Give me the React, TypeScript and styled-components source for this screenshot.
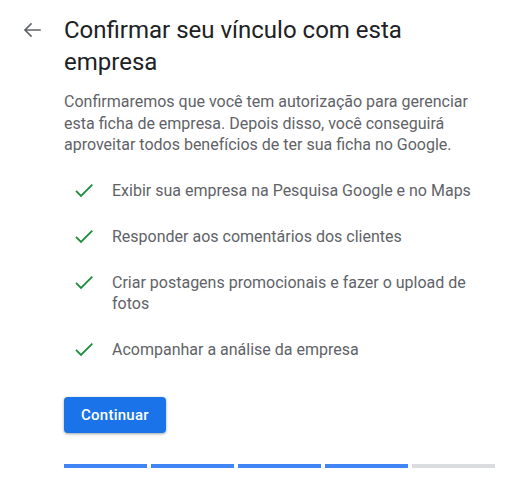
import styled, { createGlobalStyle } from "styled-components";

const benefits = [
  "Exibir sua empresa na Pesquisa Google e no Maps",
  "Responder aos comentários dos clientes",
  "Criar postagens promocionais e fazer o upload de fotos",
  "Acompanhar a análise da empresa",
];

const steps = [true, true, true, true, false];

function BackArrow() {
  return (
    <svg width="24" height="24" viewBox="0 0 24 24" fill="none">
      <path
        d="M20 12H5M11 6l-6 6 6 6"
        stroke="#5f6368"
        strokeWidth="1.6"
        strokeLinecap="square"
      />
    </svg>
  );
}

function Check() {
  return (
    <svg width="24" height="24" viewBox="0 0 24 24" fill="none">
      <path d="M4 12.9l5 5L20.3 6.6" stroke="#1e8e3e" strokeWidth="1.8" />
    </svg>
  );
}

function App() {
  return (
    <>
      <GlobalStyle />
      <Page>
        <BackButton aria-label="Voltar">
          <BackArrow />
        </BackButton>
        <Content>
          <Title>Confirmar seu vínculo com esta empresa</Title>
          <Intro>
            Confirmaremos que você tem autorização para gerenciar esta ficha de
            empresa. Depois disso, você conseguirá aproveitar todos benefícios
            de ter sua ficha no Google.
          </Intro>
          <List>
            {benefits.map((text) => (
              <Item key={text}>
                <IconCell>
                  <Check />
                </IconCell>
                <span>{text}</span>
              </Item>
            ))}
          </List>
          <PrimaryButton>Continuar</PrimaryButton>
          <Progress>
            {steps.map((done, i) => (
              <Step key={i} $done={done} />
            ))}
          </Progress>
        </Content>
      </Page>
    </>
  );
}

export default App;

const GlobalStyle = createGlobalStyle`
  body {
    margin: 0;
    background: #ffffff;
    font-family: Roboto, "Liberation Sans", sans-serif;
  }
`;

const Page = styled.div`
  display: grid;
  grid-template-columns: 64px 431px;
  padding: 14px 12px 0 0;
`;

const BackButton = styled.button`
  justify-self: center;
  width: 24px;
  height: 24px;
  margin-top: 4px;
  padding: 0;
  border: none;
  background: none;
  cursor: pointer;
`;

const Content = styled.div`
  display: flex;
  flex-direction: column;
  align-items: flex-start;
`;

const Title = styled.h1`
  margin: 0;
  max-width: 390px;
  font-size: 24px;
  line-height: 32px;
  font-weight: 400;
  color: #202124;
`;

const Intro = styled.p`
  margin: 13px 0 0;
  font-size: 16px;
  line-height: 21.5px;
  color: #5f6368;
`;

const List = styled.ul`
  display: flex;
  flex-direction: column;
  gap: 25px;
  margin: 24px 0 0;
  padding: 0;
  list-style: none;
`;

const Item = styled.li`
  display: grid;
  grid-template-columns: 48px 1fr;
  font-size: 16px;
  line-height: 21px;
  color: #5f6368;
`;

const IconCell = styled.span`
  display: flex;
  align-items: center;
  height: 21px;
  padding-left: 8px;
`;

const PrimaryButton = styled.button`
  margin-top: 37px;
  height: 36px;
  padding: 0 17px;
  border: none;
  border-radius: 4px;
  background: #1a73e8;
  color: #ffffff;
  font-family: Roboto, "Liberation Sans", sans-serif;
  font-size: 15px;
  font-weight: 500;
  letter-spacing: 0.25px;
  box-shadow: 0 1px 2px rgba(60, 64, 67, 0.3), 0 1px 3px 1px rgba(60, 64, 67, 0.15);
  cursor: pointer;
`;

const Progress = styled.div`
  display: grid;
  grid-template-columns: repeat(5, 1fr);
  gap: 4px;
  width: 100%;
  margin-top: 31px;
`;

const Step = styled.div<{ $done: boolean }>`
  height: 4px;
  background: ${(p) => (p.$done ? "#4285f4" : "#dadce0")};
`;
